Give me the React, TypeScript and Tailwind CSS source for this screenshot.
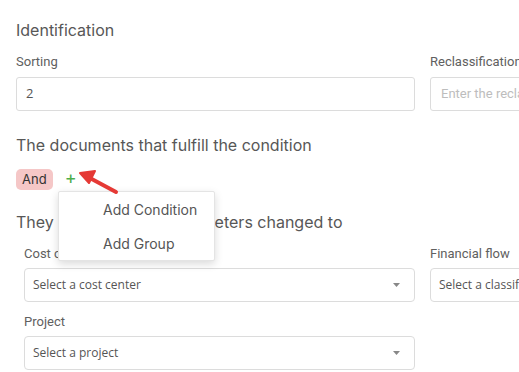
import React from 'react';

const heading = "text-[16px] leading-6 text-[#575757] font-['Inter',sans-serif]";
const label = "text-[13px] leading-[18px] text-[#606060] font-['Roboto',sans-serif]";

function Caret() {
  return (
    <svg width="7" height="4" viewBox="0 0 7 4" className="shrink-0">
      <path d="M0 0 L7 0 L3.5 4 Z" fill="#888" />
    </svg>
  );
}

function Select({ placeholder, caret = true }: { placeholder: string; caret?: boolean }) {
  return (
    <div className="h-[34px] border border-[#dcdcdc] rounded-[4px] bg-white flex items-center justify-between pl-[8px] pr-[14px]">
      <span className="text-[12px] text-[#555] font-['Open_Sans',sans-serif] whitespace-nowrap">
        {placeholder}
      </span>
      {caret && <Caret />}
    </div>
  );
}

export default function App() {
  return (
    <div className="relative w-[519px] h-[372px] overflow-hidden bg-white">
      <div className="pt-[18px] pl-4">
        <h2 className={heading}>Identification</h2>

        <div className="mt-[11px] grid grid-cols-[399px_399px] gap-x-[15px]">
          <div>
            <div className={label}>Sorting</div>
            <div className="mt-[6px] h-[34px] border border-[#dcdcdc] rounded-[3px] flex items-center px-[9px]">
              <span className="text-[13px] text-[#555] font-['Open_Sans',sans-serif]">2</span>
            </div>
          </div>
          <div>
            <div className={label}>Reclassification</div>
            <div className="mt-[6px] h-[34px] border border-[#dcdcdc] rounded-[3px] flex items-center px-[10px]">
              <span className="text-[13px] text-[#bdbdbd] font-['Roboto',sans-serif] whitespace-nowrap">
                Enter the reclassification
              </span>
            </div>
          </div>
        </div>

        <h2 className={`${heading} mt-[22px]`}>The documents that fulfill the condition</h2>

        <div className="mt-[12px] flex items-center gap-[13px]">
          <span className="h-[21px] px-[6px] rounded-[5px] bg-[#f5c7c7] text-[#333] text-[13px] leading-[21px] font-['Inter',sans-serif]">
            And
          </span>
          <span className="text-[#4cae4c] text-[18px] leading-none font-['Inter',sans-serif] -mt-[3px] -ml-[1px]">+</span>
        </div>

        <h2 className={`${heading} mt-[20px]`}>They will have their parameters changed to</h2>
      </div>

      <div className="pl-6 mt-[11px] grid grid-cols-[391px_391px] gap-x-[15px]">
        <div>
          <div className={label}>Cost center</div>
          <div className="mt-[5px]">
            <Select placeholder="Select a cost center" />
          </div>
        </div>
        <div>
          <div className={label}>Financial flow</div>
          <div className="mt-[5px]">
            <Select placeholder="Select a classification" />
          </div>
        </div>
        <div className="mt-[11px]">
          <div className={label}>Project</div>
          <div className="mt-[5px]">
            <Select placeholder="Select a project" />
          </div>
        </div>
      </div>

      {/* dropdown menu */}
      <div className="absolute left-[58px] top-[191px] w-[157px] bg-white border border-[#e4e4e4] rounded-[2px] shadow-[0_3px_8px_rgba(0,0,0,0.15)]">
        <div className="h-[34px] flex items-center pl-[44px] text-[14px] text-[#555] font-['Inter',sans-serif]">
          Add Condition
        </div>
        <div className="h-[34px] flex items-center pl-[44px] text-[14px] text-[#555] font-['Inter',sans-serif]">
          Add Group
        </div>
      </div>

      {/* annotation arrow */}
      <svg className="absolute left-[76px] top-[166px]" width="48" height="30" viewBox="0 0 48 30">
        <path d="M40 26 L12 11" stroke="#e53935" strokeWidth="4" strokeLinecap="round" />
        <path d="M4 7 L19 5 L13 17 Z" fill="#e53935" stroke="#e53935" strokeWidth="2" strokeLinejoin="round" />
      </svg>
    </div>
  );
}
